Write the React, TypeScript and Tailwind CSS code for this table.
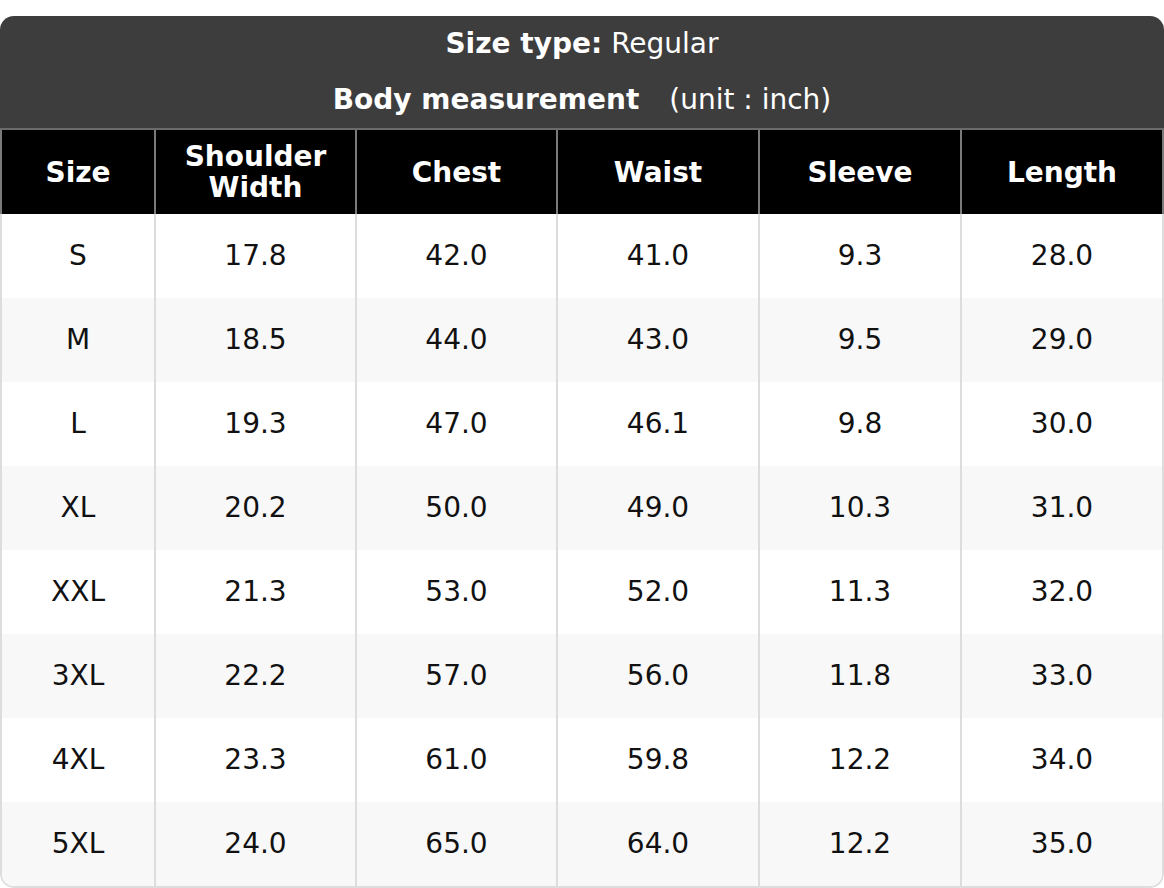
import React from "react";

const headers = ["Size", "Shoulder Width", "Chest", "Waist", "Sleeve", "Length"];
const rows = [
  ["S", "17.8", "42.0", "41.0", "9.3", "28.0"],
  ["M", "18.5", "44.0", "43.0", "9.5", "29.0"],
  ["L", "19.3", "47.0", "46.1", "9.8", "30.0"],
  ["XL", "20.2", "50.0", "49.0", "10.3", "31.0"],
  ["XXL", "21.3", "53.0", "52.0", "11.3", "32.0"],
  ["3XL", "22.2", "57.0", "56.0", "11.8", "33.0"],
  ["4XL", "23.3", "61.0", "59.8", "12.2", "34.0"],
  ["5XL", "24.0", "65.0", "64.0", "12.2", "35.0"],
];

export default function App() {
  return (
    <div className="w-[1164px] bg-white pt-[16px] font-['DejaVu_Sans',sans-serif] text-[28px]">
      <div className="overflow-hidden rounded-t-[14px] rounded-b-[14px]">
        <div className="bg-[#3d3d3d] text-white">
          <div className="flex h-[56px] items-center justify-center leading-[32px]">
            <span className="font-bold">Size type:</span>
            <span className="ml-[9px]">Regular</span>
          </div>
          <div className="flex h-[56px] items-center justify-center leading-[32px]">
            <span className="font-bold">Body measurement</span>
            <span className="ml-[30px]">(unit : inch)</span>
          </div>
        </div>
        <div className="grid grid-cols-[154px_201px_201px_202px_202px_minmax(0,1fr)] border-t-2 border-[#6b6b6b] bg-black text-white">
          {headers.map((h, i) => (
            <div
              key={h}
              className={
                "flex h-[84px] items-center justify-center border-l-2 border-[#7a7a7a] px-[20px] text-center font-bold leading-[31px] " +
                (i === headers.length - 1 ? "border-r-2" : "")
              }
            >
              {h}
            </div>
          ))}
        </div>
        <div className="overflow-hidden rounded-b-[14px] border-x-2 border-b-2 border-[#dddddd] text-[#111111]">
          {rows.map((r, ri) => (
            <div
              key={r[0]}
              className={
                "grid grid-cols-[152px_201px_201px_202px_202px_minmax(0,1fr)] " +
                (ri % 2 === 1 ? "bg-[#f8f8f8]" : "bg-white")
              }
            >
              {r.map((c, ci) => (
                <div
                  key={ci}
                  className={
                    "flex h-[84px] items-center justify-center " +
                    (ci > 0 ? "border-l-2 border-[#dddddd]" : "")
                  }
                >
                  {c}
                </div>
              ))}
            </div>
          ))}
        </div>
      </div>
    </div>
  );
}
